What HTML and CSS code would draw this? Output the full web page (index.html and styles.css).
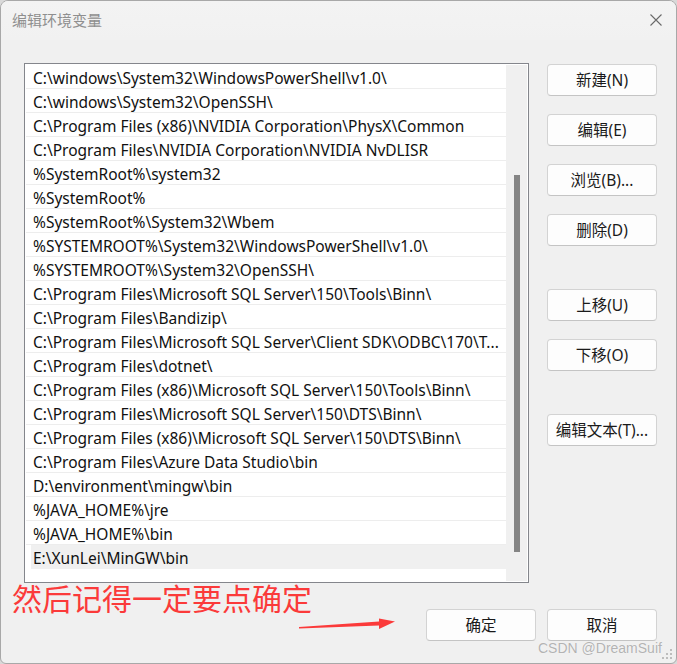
FILE: index.html
```html
<!DOCTYPE html>
<html lang="zh-CN">

<head>
    <meta charset="UTF-8">
    <meta name="viewport" content="width=device-width, initial-scale=1.0">
    <title>编辑环境变量</title>
    <link rel="stylesheet" href="styles.css">
</head>

<body>
    <div class="window">
        <div class="titlebar">
            <span class="title">编辑环境变量</span>
            <span class="close">
                <svg width="12" height="12" viewBox="0 0 12 12">
                    <path d="M0.5 0.5 L11.5 11.5 M11.5 0.5 L0.5 11.5" stroke="#6a6a6a" stroke-width="1.1" fill="none" />
                </svg>
            </span>
        </div>

        <div class="main">
            <div class="listbox">
                <ul class="rows">
                    <li>C:\windows\System32\WindowsPowerShell\v1.0\</li>
                    <li>C:\windows\System32\OpenSSH\</li>
                    <li>C:\Program Files (x86)\NVIDIA Corporation\PhysX\Common</li>
                    <li>C:\Program Files\NVIDIA Corporation\NVIDIA NvDLISR</li>
                    <li>%SystemRoot%\system32</li>
                    <li>%SystemRoot%</li>
                    <li>%SystemRoot%\System32\Wbem</li>
                    <li>%SYSTEMROOT%\System32\WindowsPowerShell\v1.0\</li>
                    <li>%SYSTEMROOT%\System32\OpenSSH\</li>
                    <li>C:\Program Files\Microsoft SQL Server\150\Tools\Binn\</li>
                    <li>C:\Program Files\Bandizip\</li>
                    <li>C:\Program Files\Microsoft SQL Server\Client SDK\ODBC\170\T...</li>
                    <li>C:\Program Files\dotnet\</li>
                    <li>C:\Program Files (x86)\Microsoft SQL Server\150\Tools\Binn\</li>
                    <li>C:\Program Files\Microsoft SQL Server\150\DTS\Binn\</li>
                    <li>C:\Program Files (x86)\Microsoft SQL Server\150\DTS\Binn\</li>
                    <li>C:\Program Files\Azure Data Studio\bin</li>
                    <li>D:\environment\mingw\bin</li>
                    <li>%JAVA_HOME%\jre</li>
                    <li>%JAVA_HOME%\bin</li>
                    <li class="sel">E:\XunLei\MinGW\bin</li>
                </ul>
                <div class="scrollbar">
                    <div class="thumb"></div>
                </div>
            </div>

            <div class="side">
                <button class="btn">新建(N)</button>
                <button class="btn">编辑(E)</button>
                <button class="btn">浏览(B)...</button>
                <button class="btn">删除(D)</button>
                <button class="btn gap">上移(U)</button>
                <button class="btn">下移(O)</button>
                <button class="btn gap">编辑文本(T)...</button>
            </div>
        </div>

        <div class="footer">
            <button class="btn">确定</button>
            <button class="btn">取消</button>
        </div>

        <!-- annotation drawn on top of the screenshot -->
        <div class="note">然后记得一定要点确定</div>
        <svg class="arrow" width="110" height="24" viewBox="0 0 110 24">
            <path d="M2 17 L82 11.5 L82 8.5 L98 11.5 L82 19 L82 15.5 L2 18.5 Z" fill="#fb3a3a" />
        </svg>

        <div class="mark">CSDN @DreamSuif</div>
        <svg class="grip" width="14" height="14" viewBox="0 0 14 14">
            <rect x="10" y="2" width="2" height="2" fill="#bdbdbd" />
            <rect x="6" y="6" width="2" height="2" fill="#bdbdbd" />
            <rect x="10" y="6" width="2" height="2" fill="#bdbdbd" />
            <rect x="2" y="10" width="2" height="2" fill="#bdbdbd" />
            <rect x="6" y="10" width="2" height="2" fill="#bdbdbd" />
            <rect x="10" y="10" width="2" height="2" fill="#bdbdbd" />
        </svg>
    </div>
</body>

</html>
```
FILE: styles.css
```css
* {
    margin: 0;
    padding: 0;
    box-sizing: border-box;
}

body {
    background-color: #d9d9d9;
    font-family: "Noto Sans", "Noto Sans CJK SC", sans-serif;
    color: #1a1a1a;
}

.window {
    width: 677px;
    height: 664px;
    position: relative;
    border: 1px solid #a8a8a8;
    border-radius: 8px 8px 6px 6px;
    background-color: #f0f0f0;
    overflow: hidden;
}

.titlebar {
    height: 39px;
    display: flex;
    align-items: center;
    justify-content: space-between;
    padding: 0 14px 0 11px;
    background: linear-gradient(#f3f3f3, #f1f1f1);
}

.title {
    font-family: "Noto Sans CJK SC", sans-serif;
    font-size: 15px;
    color: #8f8f8f;
    margin-top: -3px;
}

.close {
    display: flex;
    margin-top: -2px;
}

.main {
    display: flex;
    gap: 18px;
    padding: 23px 0 0 23px;
}

.listbox {
    width: 505px;
    height: 520px;
    border: 1px solid #84868c;
    background-color: #fff;
    padding: 1px;
    display: flex;
}

.rows {
    list-style: none;
    width: 481px;
}

.rows li {
    height: 24px;
    line-height: 24px;
    padding: 1px 2px 0 7px;
    border-bottom: 1px solid #ededed;
    font-size: 15.5px;
    white-space: nowrap;
    overflow: hidden;
    color: #111;
}

.rows li.sel {
    border-bottom-color: transparent;
    background: linear-gradient(to right, #fff 5px, #f0f0f0 5px);
}

.scrollbar {
    width: 21px;
    height: 516px;
    background-color: #f0f0f0;
    padding-top: 110px;
}

.thumb {
    width: 6px;
    height: 377px;
    margin: 0 auto;
    background-color: #858585;
}

.side {
    display: flex;
    flex-direction: column;
    gap: 18px;
    padding-top: 1px;
}

.btn {
    width: 110px;
    height: 32px;
    border: 1px solid #d3d3d3;
    border-bottom-color: #c4c4c4;
    border-radius: 4px;
    background-color: #fdfdfd;
    font-family: "Noto Sans", "Noto Sans CJK SC", sans-serif;
    font-size: 15.5px;
    line-height: 28px;
    color: #1a1a1a;
}

.side .gap {
    margin-top: 25px;
}

.footer {
    display: flex;
    justify-content: flex-end;
    gap: 11px;
    padding: 26px 19px 0 0;
}

.note {
    position: absolute;
    left: 11px;
    top: 581px;
    font-family: "Noto Sans CJK SC", sans-serif;
    font-size: 30px;
    line-height: 30px;
    color: #fb3a3a;
}

.arrow {
    position: absolute;
    left: 296px;
    top: 609px;
}

.mark {
    position: absolute;
    left: 537px;
    top: 639px;
    font-family: "Liberation Sans", sans-serif;
    font-size: 14px;
    color: #b3b3b3;
    text-shadow: 0 0 1px #fff;
}

.grip {
    position: absolute;
    right: 2px;
    bottom: 2px;
}
```
